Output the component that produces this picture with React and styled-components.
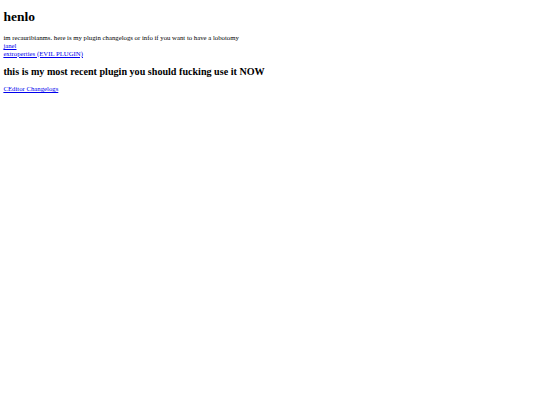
import React from 'react'
import styled, { createGlobalStyle } from 'styled-components'

// the page is a plain html page shown at 0.421875 scale
const GlobalStyle = createGlobalStyle`
    body{
        margin: 3.375px;
        background: #fff;
        color: #000;
        font-family: "Liberation Serif", "Times New Roman", serif;
    }
`;

const Title = styled.h1`
    font-size: 13.5px;
    font-weight: bold;
    margin: 6px 0 9.045px;
`;

const SubTitle = styled.h2`
    font-size: 10.125px;
    font-weight: bold;
    margin: 8.4px 0;
`;

const Text = styled.p`
    font-size: 6.75px;
    line-height: 7.6px;
    margin: 6.75px 0;
`;

const Link = styled.a`
    color: #0000ee;
    text-decoration: underline;
`;

function App() {
    return (
        <>
            <GlobalStyle />
            <Title>henlo</Title>
            <Text>
                im recauribianms. here is my plugin changelogs or info if you want to have a lobotomy
                <br />
                <Link href="#">janel</Link>
                <br />
                <Link href="#">extroperties (EVIL PLUGIN)</Link>
            </Text>
            <SubTitle>this is my most recent plugin you should fucking use it NOW</SubTitle>
            <Text>
                <Link href="#">CEditor Changelogs</Link>
            </Text>
        </>
    )
}

export default App
